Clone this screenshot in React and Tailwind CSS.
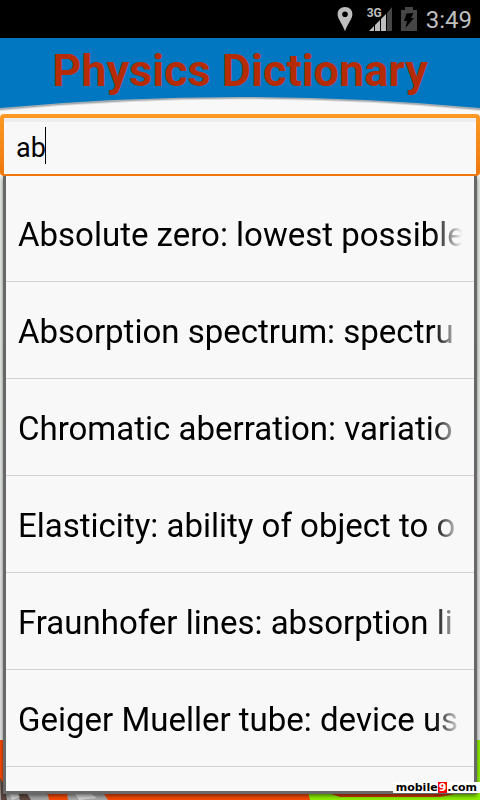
import React, { useState } from 'react';

const entries = [
  'Absolute zero: lowest possible',
  'Absorption spectrum: spectru',
  'Chromatic aberration: variatio',
  'Elasticity: ability of object to o',
  'Fraunhofer lines: absorption li',
  'Geiger Mueller tube: device us',
];

const PinIcon = () => (
  <svg width="16" height="26" viewBox="0 0 16 26" aria-hidden="true">
    <path
      d="M8 1C3.6 1 .6 4 .6 8.200c0 4.800 5 9.800 7.400 17 2.400-7.200 7.400-12.200 7.400-17C15.400 4 12.400 1 8 1Zm0 4.500a2.800 2.800 0 1 1 0 5.600 2.800 2.800 0 0 1 0-5.600Z"
      fill="#bebebe"
      fillRule="evenodd"
    />
  </svg>
);

const SignalIcon = () => (
  <span className="relative block h-6 w-6">
    <svg width="24" height="24" viewBox="0 0 24 24" aria-hidden="true">
      <path d="M0 24 5 19v5ZM6 24v-6l5-5v11ZM12 24V12l5-5v17Z" fill="#bebebe" />
      <path d="M18 24V6l5-6v24Z" fill="#464646" />
    </svg>
    <span className="absolute -top-0.5 -left-0.5 font-bold text-xs leading-4">3G</span>
  </span>
);

const BatteryIcon = () => (
  <svg width="16" height="24" viewBox="0 0 16 24" aria-hidden="true">
    <path d="M4 0h8v3h4v21H0V3h4Z" fill="#464646" />
    <path d="M5.500 6.500 12.500 6l-2.500 5h3L4.500 21l1.500-7H3Z" fill="#000" />
  </svg>
);

const StatusBar = () => (
  <div className="flex h-[38px] items-center justify-end bg-black pr-2 text-[#bebebe]">
    <PinIcon />
    <div className="ml-4 mr-2">
      <SignalIcon />
    </div>
    <BatteryIcon />
    <span className="ml-[9px] pt-0.5 text-2xl">3:49</span>
  </div>
);

const Header = () => (
  <header className="relative h-[76px]">
    <svg
      className="absolute inset-0 h-full w-full"
      viewBox="0 0 480 76"
      preserveAspectRatio="none"
      aria-hidden="true"
    >
      <path d="M0 0H480V73Q240 50 0 73Z" fill="#dcdcdc" />
      <path d="M0 0H480V72Q240 49 0 72Z" fill="#a5adb2" />
      <path d="M0 0H480V70Q240 48 0 70Z" fill="#0077c0" />
    </svg>
    <h1 className="relative pt-1 text-center text-[45px] leading-[58px] font-bold text-[#b52b03]">
      Physics Dictionary
    </h1>
  </header>
);

const SearchBox = ({ value, onChange }) => (
  <div className="relative z-10 rounded bg-linear-to-b from-[#fb9a25] to-[#ee760a] px-1 pt-1 pb-0.5">
    <input
      type="text"
      aria-label="Search the dictionary"
      value={value}
      onChange={onChange}
      className="block h-14 w-full border-t-4 border-[#eeeeee] bg-[#f8f8f8] px-3 text-[27px] text-black outline-none"
    />
    {/* text cursor */}
    <span className="absolute top-[13px] left-[45px] h-[37px] w-px bg-black" />
  </div>
);

const Suggestions = ({ items, onPick }) => (
  <ul className="absolute inset-x-[3px] top-0 bottom-1.5 overflow-hidden border-x-[3px] border-b-[3px] border-[#686868] bg-[#f8f8f8] pt-[9px] shadow-[0_2px_4px_rgba(0,0,0,0.5)]">
    {items.map((item) => (
      <li key={item} className="border-b border-[#d3d3d3]">
        <button
          type="button"
          onClick={() => onPick(item)}
          className="block h-24 w-full pt-1 pr-3 pl-3 text-left"
        >
          <span className="block overflow-hidden whitespace-nowrap text-[33px] leading-[48px] text-black mask-r-from-[calc(100%-28px)] mask-r-to-100%">
            {item}
          </span>
        </button>
      </li>
    ))}
  </ul>
);

const Tiles = () => (
  <div className="grid h-[60px] grid-cols-2">
    <svg className="h-full w-full bg-[#f84a04]" viewBox="0 0 240 60" preserveAspectRatio="none" aria-hidden="true">
      <path d="M0 39 5 46 18 50 38 49 48 55 49 60H0ZM68 60 67 55 80 50 102 51 108 60Z" fill="#a7a7a7" />
      <path d="M0 38 4 44 7 60H1ZM18 55l8-3 5 8H20Z" fill="#5d4840" />
      <path d="m7 48 8 3 5 6-8 3ZM75 54l14-2 8 6-18 2Z" fill="#d3d3d3" />
    </svg>
    <svg className="h-full w-full bg-[#8ef000]" viewBox="0 0 240 60" preserveAspectRatio="none" aria-hidden="true">
      <path d="M0 0H55L70 60H0Z" fill="#f84a04" />
      <path d="M88 53H220L200 57H100Z" fill="#d23b08" />
    </svg>
  </div>
);

const App = () => {
  const [query, setQuery] = useState('ab');

  return (
    <div className="flex min-h-screen flex-col bg-[#f8f8f8] font-[Roboto,sans-serif]">
      <StatusBar />
      <Header />
      <SearchBox value={query} onChange={(e) => setQuery(e.target.value)} />

      <main className="relative flex flex-1 flex-col">
        <div className="flex-1 bg-linear-to-b from-[#e9efe8] to-[#e4e6e4]" />
        <Tiles />
        <Suggestions items={entries} onPick={setQuery} />

        <div className="absolute right-0 bottom-[7px] flex h-[11px] items-center bg-white px-[3px] font-['DejaVu_Sans',sans-serif] text-[11px] leading-[11px] font-bold text-black">
          <span>mobile</span>
          <span className="bg-[#fb0000] px-px text-white">9</span>
          <span>.com</span>
        </div>
      </main>
    </div>
  );
};

export default App;
